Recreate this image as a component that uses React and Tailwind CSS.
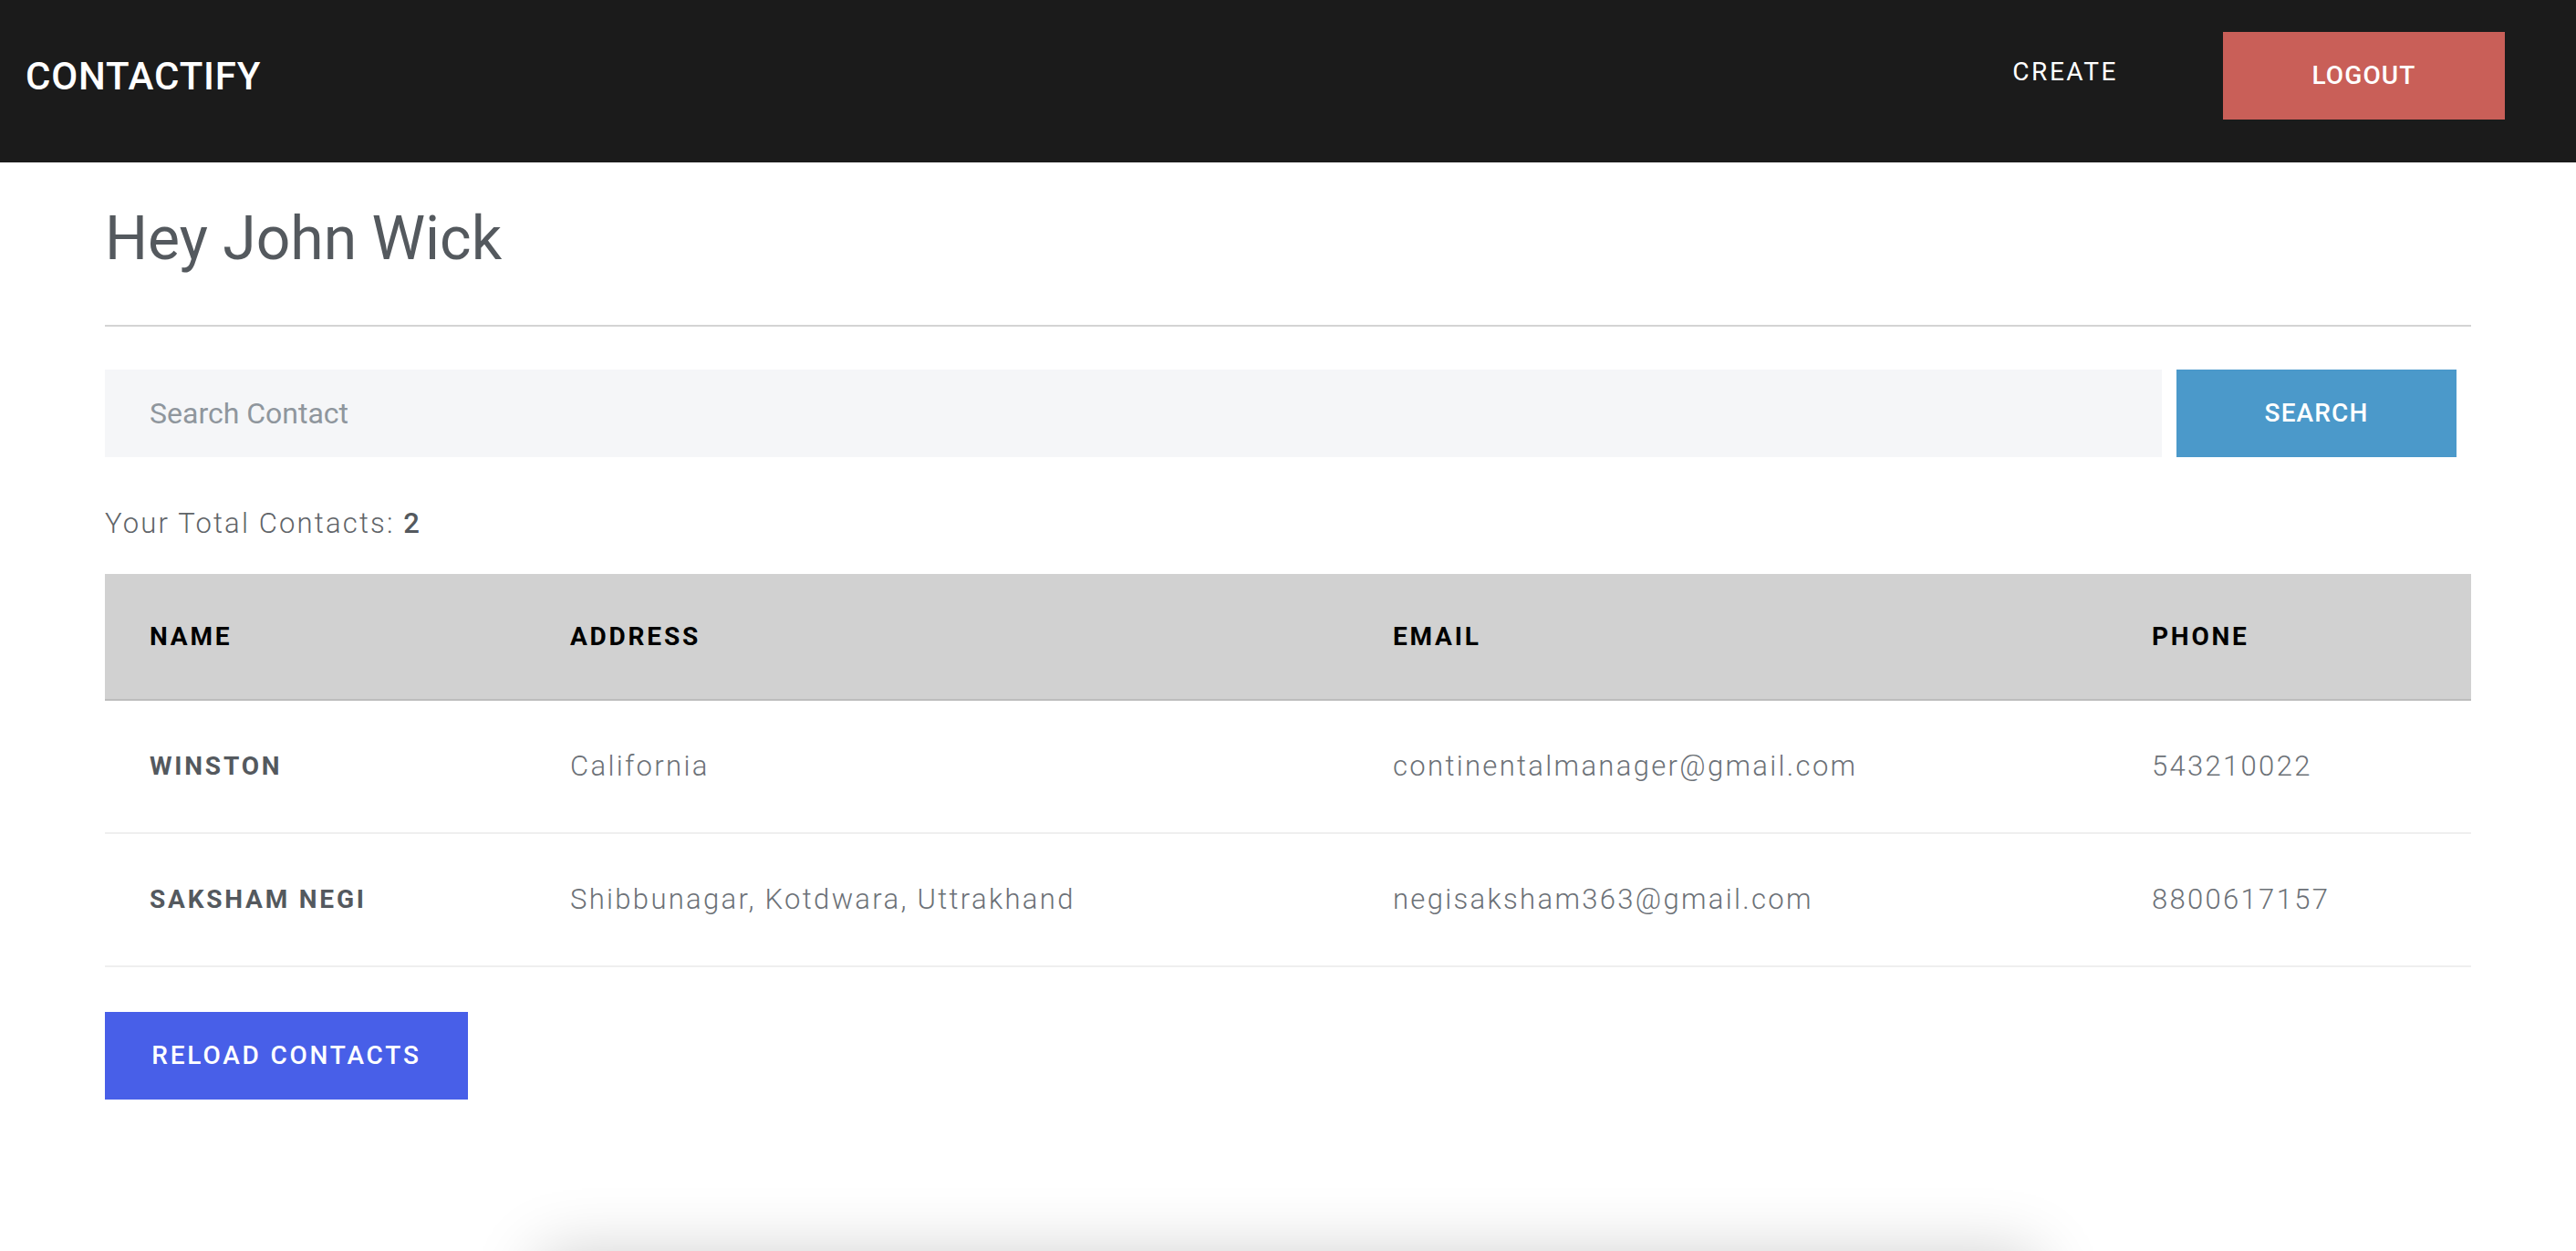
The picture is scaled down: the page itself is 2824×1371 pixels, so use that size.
import React from 'react';

const contacts = [
  { name: 'Winston', address: 'California', email: 'continentalmanager@gmail.com', phone: '543210022' },
  { name: 'Saksham Negi', address: 'Shibbunagar, Kotdwara, Uttrakhand', email: 'negisaksham363@gmail.com', phone: '8800617157' },
];

const Navbar = () => (
  <nav className="flex h-[178px] items-center justify-between bg-[#1b1b1b] pb-[12px] pl-[28px] pr-[78px]">
    <a href="#" className="text-[42px] font-medium tracking-[0.02em] text-white">CONTACTIFY</a>
    <div className="flex items-center gap-[115px]">
      <a href="#" className="mb-[8px] text-[28px] tracking-[0.09em] text-white">CREATE</a>
      <button className="flex h-[96px] w-[309px] items-center justify-center bg-[#c95f58] text-[28px] font-medium tracking-[0.04em] text-white">
        LOGOUT
      </button>
    </div>
  </nav>
);

const App = () => {
  return (
    <div className="min-h-screen bg-white font-['Roboto',sans-serif]">
      <Navbar />

      <main className="px-[115px]">
        <h1 className="mt-[45px] text-[66px] leading-[78px] text-[#54595e]">Hey John Wick</h1>
        <div className="mt-[55px] h-[2px] bg-[#d4d4d4]" />

        {/* Search */}
        <div className="mt-[47px] flex gap-[16px] pr-[16px]">
          <input
            type="text"
            placeholder="Search Contact"
            className="h-[96px] flex-1 bg-[#f5f6f8] px-[49px] text-[32px] text-[#54595e] outline-none placeholder:text-[#8f969d]"
          />
          <button className="h-[96px] w-[307px] bg-[#4b99ca] text-[28px] font-medium tracking-[0.04em] text-white">
            SEARCH
          </button>
        </div>

        <p className="mt-[55px] text-[31px] font-light leading-[36px] tracking-[0.07em] text-[#5f6468]">
          Your Total Contacts: <span className="font-medium text-[#54595e]">{contacts.length}</span>
        </p>

        {/* Contacts table */}
        <table className="mt-[37px] w-full table-fixed border-collapse text-left">
          <thead>
            <tr className="border-b-2 border-[#bdbdbd] bg-[#d1d1d1]">
              <th className="h-[138px] w-[461px] pl-[49px] text-[28px] font-bold tracking-[0.1em] text-black">NAME</th>
              <th className="w-[902px] pl-[49px] text-[28px] font-bold tracking-[0.1em] text-black">ADDRESS</th>
              <th className="w-[832px] pl-[49px] text-[28px] font-bold tracking-[0.1em] text-black">EMAIL</th>
              <th className="pl-[49px] text-[28px] font-bold tracking-[0.1em] text-black">PHONE</th>
            </tr>
          </thead>
          <tbody>
            {contacts.map((c) => (
              <tr key={c.email} className="border-b-2 border-[#efefef]">
                <td className="h-[146px] pl-[49px] text-[28px] font-bold uppercase tracking-[0.1em] text-[#54595e]">{c.name}</td>
                <td className="pl-[49px] text-[31px] font-light tracking-[0.075em] text-[#6c7177]">{c.address}</td>
                <td className="pl-[49px] text-[31px] font-light tracking-[0.075em] text-[#6c7177]">{c.email}</td>
                <td className="pl-[49px] text-[31px] font-light tracking-[0.075em] text-[#6c7177]">{c.phone}</td>
              </tr>
            ))}
          </tbody>
        </table>

        <button className="mt-[49px] h-[96px] w-[398px] bg-[#485fe8] text-[28px] font-medium tracking-[0.1em] text-white">
          RELOAD CONTACTS
        </button>
      </main>

      {/* card below the fold, only its shadow shows */}
      <div className="mx-auto mt-[170px] h-[300px] w-[1640px] bg-white shadow-[0_0_70px_rgba(0,0,0,0.2)]" />
    </div>
  );
};

export default App;
